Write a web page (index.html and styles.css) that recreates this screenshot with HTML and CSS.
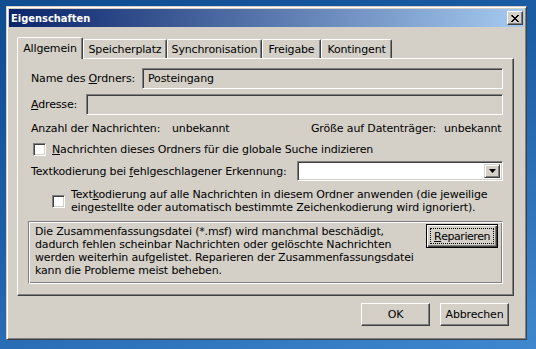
FILE: index.html
```html
<!DOCTYPE html>
<html lang="de">
<head>
  <meta charset="UTF-8" />
  <title>Eigenschaften</title>
  <link rel="stylesheet" href="styles.css">
</head>
<body>
  <div class="window">
    <!-- Title bar -->
    <div class="titlebar">
      <span class="title">Eigenschaften</span>
      <span class="close">
        <svg width="8" height="7" viewBox="0 0 8 7">
          <path d="M0 0h2v1h1v1h2v-1h1v-1h2v1h-1v1h-1v1h-1v1h1v1h1v1h1v1h-2v-1h-1v-1h-2v1h-1v1h-2v-1h1v-1h1v-1h1v-1h-1v-1h-1z" fill="#000"/>
        </svg>
      </span>
    </div>

    <div class="content">
      <!-- Tabs -->
      <div class="tabs">
        <div class="tab active tab-general">Allgemein</div>
        <div class="tab tab-storage">Speicherplatz</div>
        <div class="tab tab-sync">Synchronisation</div>
        <div class="tab tab-share">Freigabe</div>
        <div class="tab tab-quota">Kontingent</div>
      </div>

      <div class="panel">
        <div class="row row-field">
          <span class="label label-name">Name des <u>O</u>rdners:</span>
          <div class="field">Posteingang</div>
        </div>
        <div class="row row-field row-address">
          <span class="label label-address"><u>A</u>dresse:</span>
          <div class="field"></div>
        </div>
        <div class="row row-info">
          <div class="info-group info-count">
            <span class="info-label count-label">Anzahl der Nachrichten:</span>
            <span>unbekannt</span>
          </div>
          <div class="info-group">
            <span class="info-label size-label">Größe auf Datenträger:</span>
            <span>unbekannt</span>
          </div>
        </div>
        <div class="check-row check-index">
          <span class="checkbox"></span>
          <span><u>N</u>achrichten dieses Ordners für die globale Suche indizieren</span>
        </div>
        <div class="row row-encoding">
          <span class="label label-encoding">Textkodierung bei <u>f</u>ehlgeschlagener Erkennung:</span>
          <div class="combo">
            <span class="combo-btn">
              <svg width="7" height="4" viewBox="0 0 7 4"><path d="M0 0h7L3.5 4z" fill="#000"/></svg>
            </span>
          </div>
        </div>
        <div class="check-row check-apply">
          <span class="checkbox"></span>
          <span class="multi">Text<u>k</u>odierung auf alle Nachrichten in diesem Ordner anwenden (die jeweilige<br>eingestellte oder automatisch bestimmte Zeichenkodierung wird ignoriert).</span>
        </div>
        <div class="group">
          <p class="group-text">Die Zusammenfassungsdatei (*.msf) wird manchmal beschädigt,<br>dadurch fehlen scheinbar Nachrichten oder gelöschte Nachrichten<br>werden weiterhin aufgelistet. Reparieren der Zusammenfassungsdatei<br>kann die Probleme meist beheben.</p>
          <button class="btn btn-default"><span class="focus"><u>R</u>eparieren</span></button>
        </div>
      </div>

      <div class="buttons">
        <button class="btn">OK</button>
        <button class="btn">Abbrechen</button>
      </div>
    </div>
  </div>
</body>
</html>
```

FILE: styles.css
```css
* {
  box-sizing: border-box;
}

body {
  margin: 0;
  width: 536px;
  height: 349px;
  overflow: hidden;
  padding: 6px 0 0 6px;
  background: linear-gradient(160deg, #0f4c90 0%, #1d5fa8 45%, #3f88d0 100%);
  font-family: "DejaVu Sans", sans-serif;
  font-size: 11px;
  letter-spacing: -0.15px;
  color: #000;
}

u {
  text-decoration-thickness: 1px;
  text-underline-offset: 1px;
}

/* Window frame */
.window {
  width: 521px;
  height: 334px;
  background: #d4d0c8;
  border: 1px solid;
  border-color: #d4d0c8 #404040 #404040 #d4d0c8;
  box-shadow: inset 1px 1px #fff, inset -1px -1px #808080;
  padding: 2px;
}

.titlebar {
  height: 18px;
  display: flex;
  align-items: center;
  padding-left: 2px;
  background: linear-gradient(to right, #0a246a, #a6caf0);
  color: #fff;
  font-family: "DejaVu Sans Condensed", "DejaVu Sans", sans-serif;
  font-stretch: condensed;
  font-weight: bold;
  letter-spacing: 0;
}
.title {
  flex: 1;
}
.close {
  width: 16px;
  height: 14px;
  margin-right: 1px;
  display: flex;
  justify-content: center;
  align-items: center;
  background: #d4d0c8;
  border: 1px solid;
  border-color: #fff #404040 #404040 #fff;
  box-shadow: inset -1px -1px #808080;
}

/* Tabs */
.tabs {
  display: flex;
  align-items: flex-end;
  height: 21px;
  margin: 10px 0 0 8px;
}
.tab {
  height: 19px;
  display: flex;
  justify-content: center;
  align-items: center;
  padding-top: 1px;
  border: 1px solid;
  border-bottom: none;
  border-color: #fff #404040 transparent #fff;
  border-radius: 2px 2px 0 0;
  box-shadow: inset -1px 0 #808080;
  background: #d4d0c8;
}
.tab.active {
  height: 22px;
  margin-bottom: -1px;
  padding-top: 0;
  position: relative;
  z-index: 1;
}
.tab-general { width: 66px; }
.tab-storage { width: 84px; }
.tab-sync { width: 95px; }
.tab-share { width: 59px; }
.tab-quota { width: 71px; }

/* Panel */
.panel {
  margin-left: 8px;
  width: 497px;
  height: 238px;
  display: flex;
  flex-direction: column;
  padding: 9px 10px 0 13px;
  border: 1px solid;
  border-color: #fff #404040 #404040 #fff;
  box-shadow: inset -1px -1px #808080;
}

.row {
  display: flex;
  align-items: center;
}
.row-field {
  height: 21px;
}
.row-address {
  margin-top: 5px;
}
.label-name { width: 111px; }
.label-address { width: 55px; }
.label-encoding { width: 266px; }

.field {
  flex: 1;
  height: 21px;
  padding: 3px 0 0 5px;
  border: 1px solid;
  border-color: #808080 #fff #fff #808080;
  box-shadow: inset 1px 1px #404040, inset -1px -1px #d4d0c8;
}

.row-info {
  height: 13px;
  margin-top: 7px;
}
.info-group {
  display: flex;
}
.info-count { width: 280px; }
.count-label { width: 141px; }
.size-label { width: 133px; }

/* Checkboxes */
.check-row {
  display: flex;
  align-items: center;
  gap: 6px;
}
.check-index {
  height: 13px;
  margin-top: 8px;
  padding-left: 2px;
}
.check-apply {
  margin-top: 7px;
  padding-left: 21px;
}
.checkbox {
  width: 13px;
  height: 13px;
  flex: none;
  background: #fff;
  border: 1px solid;
  border-color: #808080 #fff #fff #808080;
  box-shadow: inset 1px 1px #404040, inset -1px -1px #d4d0c8;
}
.multi {
  line-height: 13px;
  white-space: nowrap;
}

/* Combo box */
.row-encoding {
  margin-top: 5px;
}
.combo {
  flex: 1;
  height: 20px;
  display: flex;
  justify-content: flex-end;
  padding: 2px;
  background: #fff;
  border: 1px solid;
  border-color: #808080 #fff #fff #808080;
  box-shadow: inset 1px 1px #404040, inset -1px -1px #d4d0c8;
}
.combo-btn {
  width: 16px;
  height: 14px;
  display: flex;
  justify-content: center;
  align-items: center;
  background: #d4d0c8;
  border: 1px solid;
  border-color: #d4d0c8 #404040 #404040 #d4d0c8;
  box-shadow: inset 1px 1px #fff, inset -1px -1px #808080;
}

/* Repair group */
.group {
  display: flex;
  align-items: flex-start;
  height: 63px;
  margin: 7px 0 0 -3px;
  padding: 1px 4px 0 5px;
  border: 1px solid;
  border-color: #808080 #fff #fff #808080;
  box-shadow: inset 1px 1px #fff, inset -1px -1px #808080;
}
.group-text {
  flex: 1;
  margin: 2px 0 0 1px;
  line-height: 13px;
  white-space: nowrap;
}

/* Buttons */
.btn {
  width: 69px;
  height: 23px;
  padding: 0;
  font: inherit;
  letter-spacing: inherit;
  color: #000;
  background: #d4d0c8;
  border: 1px solid;
  border-color: #fff #404040 #404040 #fff;
  box-shadow: inset -1px -1px #808080;
}
.btn-default {
  width: 72px;
  height: 24px;
  margin-top: 1px;
  flex: none;
  border-color: #000;
  box-shadow: inset 1px 1px #fff, inset -1px -1px #404040, inset -2px -2px #808080;
  display: flex;
  padding: 3px;
  letter-spacing: -0.45px;
}
.focus {
  flex: 1;
  display: flex;
  justify-content: center;
  align-items: center;
  border: 1px dotted #000;
}

.buttons {
  display: flex;
  justify-content: flex-end;
  gap: 10px;
  margin-top: 7px;
  padding-right: 15px;
}
```
